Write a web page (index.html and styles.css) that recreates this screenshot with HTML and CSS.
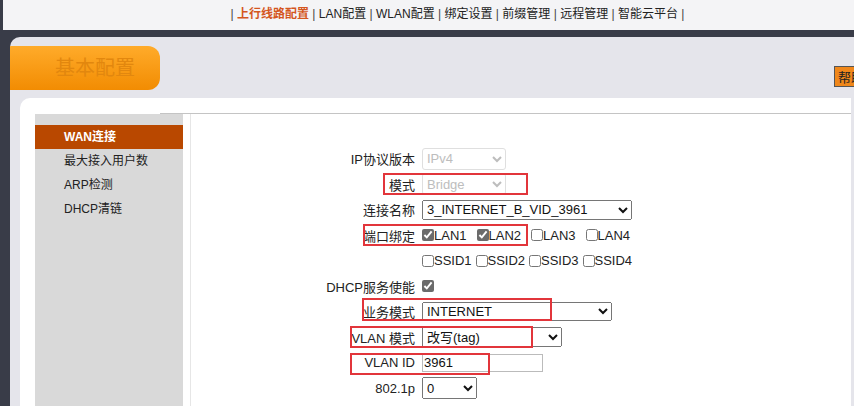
FILE: index.html
```html
<!DOCTYPE html>
<html lang="zh">

<head>
    <meta charset="UTF-8">
    <meta name="viewport" content="width=device-width, initial-scale=1.0">
    <link rel="stylesheet" href="styles.css">
</head>

<body>
    <!-- Obere Navigation -->
    <nav class="topnav">
        <span class="sep">|</span> <a class="active">上行线路配置</a>
        <span class="sep">|</span> <a>LAN配置</a>
        <span class="sep">|</span> <a>WLAN配置</a>
        <span class="sep">|</span> <a>绑定设置</a>
        <span class="sep">|</span> <a>前缀管理</a>
        <span class="sep">|</span> <a>远程管理</a>
        <span class="sep">|</span> <a>智能云平台</a>
        <span class="sep">|</span>
    </nav>

    <div class="frame">
        <!-- Reiter und Hilfe-Knopf -->
        <div class="tabbar">
            <div class="tab">基本配置</div>
            <button class="help">帮助</button>
        </div>

        <div class="card">
            <div class="card-top"></div>
            <div class="card-body">
                <!-- Seitenmenü -->
                <ul class="sidebar">
                    <li class="selected">WAN连接</li>
                    <li>最大接入用户数</li>
                    <li>ARP检测</li>
                    <li>DHCP清链</li>
                </ul>

                <!-- Formular -->
                <div class="form">
                    <div class="row">
                        <label>IP协议版本</label>
                        <select class="sel-small" disabled><option>IPv4</option></select>
                    </div>
                    <div class="row">
                        <label>模式</label>
                        <select class="sel-small" disabled><option>Bridge</option></select>
                        <span class="mark mark-mode"></span>
                    </div>
                    <div class="row">
                        <label>连接名称</label>
                        <select class="sel-conn"><option>3_INTERNET_B_VID_3961</option></select>
                    </div>
                    <div class="row">
                        <label>端口绑定</label>
                        <span class="opt"><input type="checkbox" checked>LAN1</span>
                        <span class="opt"><input type="checkbox" checked>LAN2</span>
                        <span class="opt"><input type="checkbox">LAN3</span>
                        <span class="opt"><input type="checkbox">LAN4</span>
                        <span class="mark mark-port"></span>
                    </div>
                    <div class="row">
                        <label></label>
                        <span class="opt opt-ssid"><input type="checkbox">SSID1</span>
                        <span class="opt opt-ssid"><input type="checkbox">SSID2</span>
                        <span class="opt opt-ssid"><input type="checkbox">SSID3</span>
                        <span class="opt opt-ssid"><input type="checkbox">SSID4</span>
                    </div>
                    <div class="row">
                        <label>DHCP服务使能</label>
                        <span class="opt"><input type="checkbox" checked></span>
                    </div>
                    <div class="row">
                        <label>业务模式</label>
                        <select class="sel-svc"><option>INTERNET</option></select>
                        <span class="mark mark-svc"></span>
                    </div>
                    <div class="row">
                        <label>VLAN 模式</label>
                        <select class="sel-vlan"><option>改写(tag)</option></select>
                        <span class="mark mark-vlan"></span>
                    </div>
                    <div class="row">
                        <label>VLAN ID</label>
                        <input class="vlan-id" type="text" value="3961">
                        <span class="mark mark-id"></span>
                    </div>
                    <div class="row">
                        <label>802.1p</label>
                        <select class="sel-pri"><option>0</option></select>
                    </div>
                </div>
            </div>
        </div>
    </div>
</body>

</html>
```

FILE: styles.css
```css
/* Grundlayout */
body {
    margin: 0;
    height: 406px;
    overflow: hidden;
    background: #393c48; /* dunkler Rand */
    font-family: "Liberation Sans", "Noto Sans CJK SC", sans-serif;
    font-size: 13px;
    color: #222;
}

/* Obere Navigation */
.topnav {
    height: 30px;
    line-height: 28px;
    margin: 0 0 7px 3px;
    padding-left: 58px;
    background: #f4f4f6;
    text-align: center;
    font-size: 12px;
    color: #222;
}

.topnav a {
    color: #222;
}

.topnav a.active {
    color: #d4561e;
    font-weight: bold;
}

.topnav .sep {
    color: #444;
}

/* Grauer Rahmen */
.frame {
    margin-left: 10px;
    padding-top: 9px;
    height: 360px;
    background: #e5e5eb;
    border-top-left-radius: 10px;
    overflow: hidden;
}

.tabbar {
    display: flex;
    justify-content: space-between;
    align-items: flex-end;
    height: 44px;
}

.tab {
    margin-left: -10px;
    width: 160px;
    height: 44px;
    box-sizing: border-box;
    padding-left: 55px;
    line-height: 44px;
    font-size: 20px;
    color: #e2870e;
    background: linear-gradient(#ffab2a, #f28c02);
    border-radius: 0 12px 12px 0;
}

.help {
    width: 40px;
    height: 21px;
    margin: 0 -20px 3px 0;
    padding: 0 0 0 3px;
    text-align: left;
    font-family: inherit;
    font-size: 13px;
    color: #222;
    background: #f0871a;
    border: 1px solid #555;
}

/* Weiße Karte */
.card {
    margin: 8px 3px 0 10px;
    height: 320px;
    background: #fff;
    border-top-left-radius: 10px;
}

.card-top {
    height: 15px;
    margin-left: 140px;
    border-bottom: 1px solid #c4c4c4;
}

.card-body {
    display: flex;
}

/* Seitenmenü */
.sidebar {
    list-style: none;
    margin: 0 0 0 15px;
    padding: 11px 0 0;
    width: 148px;
    height: 300px;
    background: #d9d9d9;
    font-size: 12px;
}

.sidebar li {
    height: 24px;
    line-height: 24px;
    padding-left: 29px;
    color: #222;
}

.sidebar li.selected {
    background: #b94800;
    color: #fff;
    font-weight: bold;
}

/* Formular */
.form {
    flex: 1;
    margin-left: 7px;
    padding-top: 32px;
    border-left: 1px solid #e6e6e6;
}

.row {
    position: relative;
    display: flex;
    align-items: center;
    height: 25.5px;
}

.row label {
    flex: none;
    width: 224px;
    margin-right: 7px;
    text-align: right;
}

select,
input[type="text"] {
    box-sizing: border-box;
    margin: 0;
    font-family: inherit;
    font-size: 13px;
    color: #111;
}

.sel-small {
    width: 84px;
    height: 22px;
}

.sel-small:disabled {
    color: #a2a2a2;
    background: #fff;
    border: 1px solid #d2d2d2;
    border-radius: 3px;
}

.sel-conn {
    width: 210px;
    height: 20px;
}

.sel-svc {
    width: 190px;
    height: 19px;
}

.sel-vlan {
    width: 140px;
    height: 20px;
}

.sel-pri {
    width: 55px;
    height: 22px;
}

.vlan-id {
    width: 121px;
    height: 18px;
    padding: 0 0 0 1px;
    border: 1px solid #bbb;
}

/* Kontrollkästchen */
.opt {
    display: inline-flex;
    align-items: center;
    width: 54.5px;
    flex: none;
}

.opt-ssid {
    width: 53.5px;
}

.opt input {
    width: 12px;
    height: 12px;
    margin: 0;
    accent-color: #6b6b6b;
}

/* Rote Markierungen */
.mark {
    position: absolute;
    box-sizing: border-box;
    height: 22px;
    border: 2px solid #e2353b;
    pointer-events: none;
}

.mark-mode {
    left: 192px;
    top: 1px;
    width: 145px;
}

.mark-port {
    left: 172px;
    top: 1.5px;
    width: 165px;
}

.mark-svc {
    left: 171px;
    top: -1px;
    width: 190px;
    height: 23px;
}

.mark-vlan {
    left: 159px;
    top: 1.5px;
    width: 183px;
}

.mark-id {
    left: 159px;
    top: 3px;
    width: 140px;
}
```
